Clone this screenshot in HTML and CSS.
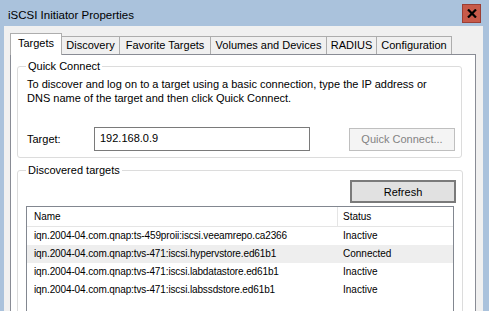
FILE: index.html
```html
<!DOCTYPE html>
<html lang="en">
<head>
  <meta charset="UTF-8" />
  <title>iSCSI Initiator Properties</title>
  <link rel="stylesheet" href="styles.css">
</head>
<body>
  <div class="window">
    <div class="titlebar">
      <span class="title">iSCSI Initiator Properties</span>
      <button class="close" title="Close">
        <svg width="10" height="9" viewBox="0 0 10 9">
          <path d="M1 0.5 L9 8.5 M9 0.5 L1 8.5" stroke="#000" stroke-width="2.2" fill="none"/>
        </svg>
      </button>
    </div>

    <div class="client">
      <div class="tabs">
        <div class="tab active">Targets</div>
        <div class="tab">Discovery</div>
        <div class="tab">Favorite Targets</div>
        <div class="tab">Volumes and Devices</div>
        <div class="tab">RADIUS</div>
        <div class="tab">Configuration</div>
      </div>

      <div class="page">
        <!-- Quick Connect -->
        <fieldset class="group quick">
          <legend>Quick Connect</legend>
          <p class="hint">To discover and log on to a target using a basic connection, type the IP address or<br>
            DNS name of the target and then click Quick Connect.</p>
          <div class="target-row">
            <label for="target">Target:</label>
            <input id="target" type="text" value="192.168.0.9">
            <button class="btn" disabled>Quick Connect...</button>
          </div>
        </fieldset>

        <!-- Discovered targets -->
        <fieldset class="group discovered">
          <legend>Discovered targets</legend>
          <div class="refresh-row">
            <button class="btn default">Refresh</button>
          </div>
          <div class="listview">
            <div class="lv-head">
              <div class="col-name">Name</div>
              <div class="col-status">Status</div>
            </div>
            <div class="lv-row">
              <div class="col-name">iqn.2004-04.com.qnap:ts-459proii:iscsi.veeamrepo.ca2366</div>
              <div class="col-status">Inactive</div>
            </div>
            <div class="lv-row hover">
              <div class="col-name">iqn.2004-04.com.qnap:tvs-471:iscsi.hypervstore.ed61b1</div>
              <div class="col-status">Connected</div>
            </div>
            <div class="lv-row">
              <div class="col-name">iqn.2004-04.com.qnap:tvs-471:iscsi.labdatastore.ed61b1</div>
              <div class="col-status">Inactive</div>
            </div>
            <div class="lv-row">
              <div class="col-name">iqn.2004-04.com.qnap:tvs-471:iscsi.labssdstore.ed61b1</div>
              <div class="col-status">Inactive</div>
            </div>
          </div>
        </fieldset>
      </div>
    </div>
  </div>
</body>
</html>
```

FILE: styles.css
```css
html, body {
  margin: 0;
  height: 100%;
  overflow: hidden;
}
body {
  background-color: #aac2dc;
  font-family: "Liberation Sans", Arial, sans-serif;
  font-size: 11px;
  color: #000;
}
.window {
  padding: 0 6px 0 4px;
  height: 100%;
  box-sizing: border-box;
  display: flex;
  flex-direction: column;
}
.titlebar {
  height: 26px;
  flex: none;
  display: flex;
  align-items: center;
  justify-content: space-between;
}
.title {
  font-size: 11.5px;
  padding-left: 4px;
  margin-top: 3px;
}
.close {
  width: 19px;
  height: 19px;
  margin: 1px 2px 0 0;
  padding: 0;
  border: 1px solid #9c3e34;
  background: #c75a4a;
  display: flex;
  align-items: center;
  justify-content: center;
}
.client {
  flex: 1;
  min-height: 0;
  background: #f0f0f0;
  padding: 7px 7px 0 6px;
  display: flex;
  flex-direction: column;
}

/* tabs */
.tabs {
  display: flex;
  align-items: flex-end;
  height: 21px;
  flex: none;
  position: relative;
  z-index: 1;
}
.tab {
  height: 18px;
  line-height: 17px;
  padding: 0;
  text-align: center;
  white-space: nowrap;
  border: 1px solid #adadad;
  border-bottom: none;
  border-left: none;
  background: #f0f0f0;
  box-sizing: border-box;
}
.tab.active {
  width: 52px;
  height: 22px;
  line-height: 19px;
  background: #fff;
  border-left: 1px solid #adadad;
  margin-bottom: -1px;
}
.tab:nth-child(2) { width: 58px; }
.tab:nth-child(3) { width: 91px; }
.tab:nth-child(4) { width: 116px; }
.tab:nth-child(5) { width: 50px; }
.tab:nth-child(6) { width: 75px; }

.page {
  flex: 1;
  min-height: 0;
  background: #fff;
  border: 1px solid #898c95;
  border-bottom: none;
  padding: 5px 13px 0 6px;
}

/* group boxes */
.group {
  margin: 0;
  padding: 0 8px 6px 9px;
  border: 1px solid #dcdcdc;
  border-radius: 3px;
}
.group legend {
  padding: 0 2px;
  margin-left: -1px;
  line-height: 13px;
}
.hint {
  margin: 4px 0 0;
  line-height: 14px;
}
.target-row {
  display: flex;
  align-items: center;
  margin-top: 22px;
}
.target-row label {
  width: 67px;
}
.target-row input {
  width: 216px;
  height: 24px;
  box-sizing: border-box;
  border: 1px solid #7a7a7a;
  font: inherit;
  padding: 0 5px 2px;
  margin: 0;
  outline: none;
}
.btn {
  width: 106px;
  height: 23px;
  font: inherit;
  border: 1px solid #adadad;
  background: #e1e1e1;
  color: #000;
  padding: 0;
  margin-left: auto;
}
.target-row .btn {
  margin-right: -2px;
}
.btn:disabled {
  background: #f4f4f4;
  border-color: #bfbfbf;
  color: #838383;
}
.btn.default {
  border: 2px solid #7a7a7a;
}
.discovered {
  margin-top: 6px;
  height: 150px;
}
.refresh-row {
  display: flex;
  margin: 3px -2px 0 0;
}

/* list view */
.listview {
  margin: 3px 0 0 -1px;
  width: 428px;
  height: 110px;
  box-sizing: border-box;
  border: 1px solid #828790;
  background: #fff;
  font-size: 10px;
}
.lv-head, .lv-row {
  display: flex;
  height: 18px;
  line-height: 18px;
}
.lv-head {
  height: 19px;
  line-height: 19px;
  border-bottom: 1px solid #e5e5e5;
}
.col-name {
  width: 303px;
  padding-left: 7px;
  white-space: nowrap;
}
.lv-row .col-name {
  letter-spacing: -0.12px;
}
.col-status {
  padding-left: 5px;
}
.lv-head .col-name {
  border-right: 1px solid #e5e5e5;
}
.lv-row .col-name {
  margin-right: 1px;
}
.lv-row.hover {
  background: #eeeeee;
}
```
